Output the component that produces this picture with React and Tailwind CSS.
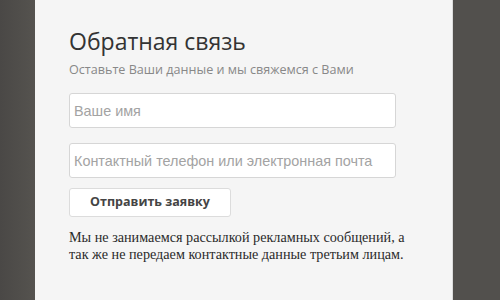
export default function App() {
  return (
    <div className="flex h-[300px] w-[500px] overflow-hidden bg-[#52504d]">
      <div className="w-[35px] bg-gradient-to-r from-[#4a4846] to-[#55534f]" />
      <div className="h-full w-[418px] border-r border-[#dcdcdc] bg-[#f5f5f5] pl-[34px] pt-[25px]">
        <h2 className="font-['Open_Sans',sans-serif] text-[23px] leading-[32px] text-[#333]">
          Обратная связь
        </h2>
        <p className="mt-[4px] font-['Open_Sans',sans-serif] text-[12.6px] leading-[18px] text-[#888]">
          Оставьте Ваши данные и мы свяжемся с Вами
        </p>
        <form className="mt-[14px] flex flex-col">
          <input
            placeholder="Ваше имя"
            className="h-[35px] w-[327px] rounded-[3px] border border-[#d6d6d6] bg-white px-[4px] font-['Liberation_Sans',sans-serif] text-[14.4px] text-[#555] placeholder:text-[#a3a3a3]"
          />
          <input
            placeholder="Контактный телефон или электронная почта"
            className="mt-[15px] h-[35px] w-[327px] rounded-[3px] border border-[#d6d6d6] bg-white px-[4px] font-['Liberation_Sans',sans-serif] text-[14.4px] text-[#555] placeholder:text-[#a3a3a3]"
          />
          <button
            type="button"
            className="mt-[10px] h-[29px] w-[162px] rounded-[3px] border border-[#dcdcdc] bg-white font-['Open_Sans',sans-serif] text-[12.5px] font-bold text-[#444]"
          >
            Отправить заявку
          </button>
        </form>
        <p className="mt-[12px] w-[345px] font-['Liberation_Serif',serif] text-[14.2px] leading-[17px] text-[#2a2a2a]">
          Мы не занимаемся рассылкой рекламных сообщений, а так же не передаем контактные данные третьим лицам.
        </p>
      </div>
    </div>
  );
}
